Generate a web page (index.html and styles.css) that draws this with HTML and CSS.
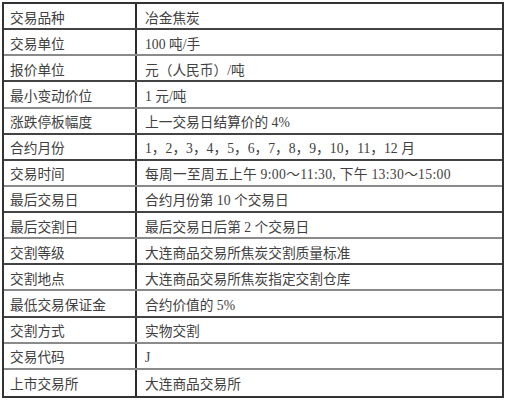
FILE: index.html
```html
<!DOCTYPE html>
<html lang="zh">
<head>
<meta charset="utf-8">
<link rel="stylesheet" href="styles.css">
</head>
<body>
<div class="spec">
  <div class="row d"><div class="k">交易品种</div><div class="v">冶金焦炭</div></div>
  <div class="row g"><div class="k">交易单位</div><div class="v">100 吨/手</div></div>
  <div class="row d"><div class="k">报价单位</div><div class="v">元（人民币）/吨</div></div>
  <div class="row g"><div class="k">最小变动价位</div><div class="v">1 元/吨</div></div>
  <div class="row d"><div class="k">涨跌停板幅度</div><div class="v">上一交易日结算价的 4%</div></div>
  <div class="row d"><div class="k">合约月份</div><div class="v">1，2，3，4，5，6，7，8，9，10，11，12 月</div></div>
  <div class="row g"><div class="k">交易时间</div><div class="v wide">每周一至周五上午 9:00～11:30, 下午 13:30～15:00</div></div>
  <div class="row d"><div class="k">最后交易日</div><div class="v">合约月份第 10 个交易日</div></div>
  <div class="row g"><div class="k">最后交割日</div><div class="v">最后交易日后第 2 个交易日</div></div>
  <div class="row d"><div class="k">交割等级</div><div class="v">大连商品交易所焦炭交割质量标准</div></div>
  <div class="row g"><div class="k">交割地点</div><div class="v">大连商品交易所焦炭指定交割仓库</div></div>
  <div class="row d"><div class="k">最低交易保证金</div><div class="v">合约价值的 5%</div></div>
  <div class="row g"><div class="k">交割方式</div><div class="v">实物交割</div></div>
  <div class="row g"><div class="k">交易代码</div><div class="v">J</div></div>
  <div class="row last"><div class="k">上市交易所</div><div class="v">大连商品交易所</div></div>
</div>
</body>
</html>
```
FILE: styles.css
```css
html, body {
  margin: 0;
  padding: 0;
  background: #ffffff;
}
body {
  padding: 2px 0 0 2px;
}
.spec {
  width: 502px;
  box-sizing: border-box;
  border: 2px solid #333;
  font-family: "Liberation Serif", "Noto Sans CJK SC", serif;
  font-size: 13.7px;
  color: #404040;
}
.row {
  display: grid;
  grid-template-columns: 133px 1fr;
  height: 26.13px;
  box-sizing: border-box;
  border-bottom: 2px solid #8a8a8a;
}
.row.d {
  border-bottom-color: #444;
}
.row.last {
  border-bottom: none;
}
.k, .v {
  display: flex;
  align-items: center;
  padding-top: 5px;
  box-sizing: border-box;
  white-space: nowrap;
  line-height: 16px;
}
.k {
  padding-left: 6px;
  border-right: 2px solid #2a2a2a;
}
.v {
  padding-left: 8px;
}
.v.wide {
  letter-spacing: 0.3px;
}
```
